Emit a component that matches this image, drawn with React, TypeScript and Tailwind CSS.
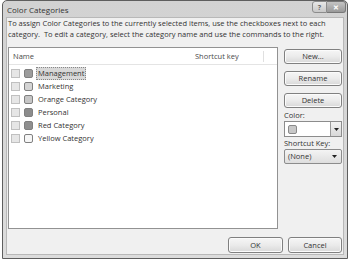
import React from 'react';

const rows = [
  { name: 'Management', swatch: 'bg-[#9c9c9c]', selected: true },
  { name: 'Marketing', swatch: 'bg-[#d4d4d4]' },
  { name: 'Orange Category', swatch: 'bg-[#c6c6c6]' },
  { name: 'Personal', swatch: 'bg-[#8c8c8c]' },
  { name: 'Red Category', swatch: 'bg-[#8f8f8f]' },
  { name: 'Yellow Category', swatch: 'bg-[#f6f6f6]' },
];

function Button({ label, className = '' }: { label: string; className?: string }) {
  return (
    <div
      className={`flex items-center justify-center rounded-[3px] border border-[#808080] bg-gradient-to-b from-[#f6f6f6] via-[#ebebeb] to-[#d8d8d8] text-[#333] shadow-[inset_0_0_0_1px_#fbfbfb] ${className}`}
    >
      {label}
    </div>
  );
}

function DropArrow() {
  return (
    <svg width="5" height="3" viewBox="0 0 5 3">
      <path d="M0 0h5L2.5 3z" fill="#222" />
    </svg>
  );
}

export default function App() {
  return (
    <div
      className="h-[263px] w-[350px] bg-white text-[7.5px] leading-[11px] text-[#333]"
      style={{ fontFamily: '"Open Sans", "Noto Sans", sans-serif' }}
    >
      <div className="ml-[2px] flex h-[259px] w-[346px] flex-col rounded-t-[5px] border border-[#5e5e5e] bg-gradient-to-b from-[#d2d2d2] to-[#dcdcdc]">
        {/* title bar */}
        <div className="flex h-[16px] items-center justify-between pl-[4px] pr-[1px]">
          <span className="text-[8px] text-[#333]">Color Categories</span>
          <div className="flex h-[12px] self-start">
            <div className="flex w-[15px] items-center justify-center rounded-l-[3px] border border-[#8c8c8c] bg-gradient-to-b from-[#e8e8e8] to-[#c8c8c8] text-[7px] font-bold text-[#666]">
              ?
            </div>
            <div className="flex w-[19px] items-center justify-center rounded-r-[3px] border border-l-0 border-[#777] bg-gradient-to-b from-[#c4c4c4] to-[#999] text-[7px] font-bold text-white">
              ✕
            </div>
          </div>
        </div>

        {/* client */}
        <div className="mx-[3px] mb-[3px] flex flex-1 flex-col border border-[#b8b8b8] bg-[#f0f0f0] px-[1px]">
          <p>
            To assign Color Categories to the currently selected items, use the checkboxes next to each
            <br />
            category.&nbsp; To edit a category, select the category name and use the commands to the right.
          </p>

          <div className="mt-[7px] flex gap-[6px]">
            {/* list */}
            <div className="h-[182px] w-[270px] border border-[#929292] bg-white">
              <div className="flex h-[17px] items-end border-b border-[#e4e4e4] pb-[2px] text-[#4a4a4a]">
                <span className="w-[185px] pl-[4px]">Name</span>
                <span className="w-[70px] border-r border-[#e0e0e0] pl-[1px]">Shortcut key</span>
              </div>
              <div className="mt-[2px] flex flex-col">
                {rows.map((r) => (
                  <div key={r.name} className="flex h-[13px] items-center pl-[2px]">
                    <div className="h-[9px] w-[9px] border border-[#c0c0c0] bg-[#e6e6e6]" />
                    <div className={`ml-[4px] h-[9px] w-[9px] rounded-[2px] border border-[#808080] ${r.swatch}`} />
                    <span
                      className={`ml-[3px] px-[1px] ${r.selected ? 'border border-dotted border-[#888] bg-[#d8d8d8]' : 'border border-transparent'}`}
                    >
                      {r.name}
                    </span>
                  </div>
                ))}
              </div>
            </div>

            {/* right column */}
            <div className="flex w-[58px] flex-col pt-[2px]">
              <Button label="New..." className="h-[15px]" />
              <Button label="Rename" className="mt-[7px] h-[15px]" />
              <Button label="Delete" className="mt-[7px] h-[15px]" />
              <span className="mt-[2px]">Color:</span>
              <div className="flex h-[16px] items-center border border-[#8c8c8c] bg-white">
                <div className="ml-[3px] h-[9px] w-[9px] rounded-[2px] border border-[#8a8a8a] bg-[#c8c8c8]" />
                <div className="ml-auto flex h-full w-[11px] items-center justify-center border-l border-[#9a9a9a] bg-gradient-to-b from-[#f2f2f2] to-[#d8d8d8]">
                  <DropArrow />
                </div>
              </div>
              <span className="mt-[1px]">Shortcut Key:</span>
              <div className="flex h-[15px] items-center justify-between rounded-[2px] border border-[#8c8c8c] bg-gradient-to-b from-[#f4f4f4] to-[#dedede] pl-[3px] pr-[4px]">
                <span>(None)</span>
                <DropArrow />
              </div>
            </div>
          </div>

          <div className="mt-auto mb-[1px] flex justify-end gap-[5px]">
            <Button label="OK" className="h-[16px] w-[55px]" />
            <Button label="Cancel" className="h-[16px] w-[54px]" />
          </div>
        </div>
      </div>
    </div>
  );
}
